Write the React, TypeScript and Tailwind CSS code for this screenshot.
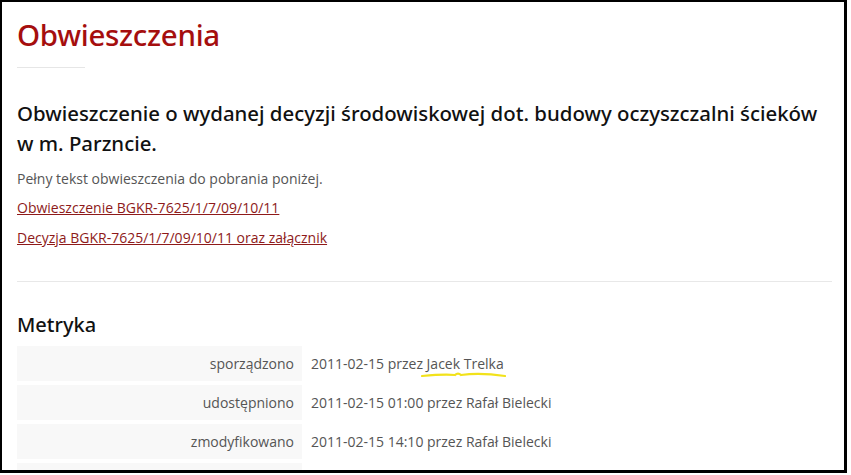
import React from "react";

const rows = [
  { label: "sporządzono", value: "2011-02-15 przez ", person: "Jacek Trelka", mark: true },
  { label: "udostępniono", value: "2011-02-15 01:00 przez ", person: "Rafał Bielecki" },
  { label: "zmodyfikowano", value: "2011-02-15 14:10 przez ", person: "Rafał Bielecki" },
  { label: "", value: "", person: "" },
];

export default function App() {
  return (
    <div className="w-[851px] h-[475px] bg-white">
      <div className="w-[847px] h-[473px] border-l-2 border-t-2 border-r-[3px] border-b-[3px] border-black overflow-hidden bg-white pl-[15px] pr-[12px] font-['Open_Sans',sans-serif]">
        <h1 className="pt-[13px] text-[29.5px] leading-[40px] text-[#a50e0e] font-['Noto_Sans',sans-serif] font-medium tracking-[-0.3px]">
          Obwieszczenia
        </h1>
        <div className="mt-[12px] w-[68px] h-px bg-[#e6e6e6]" />
        <h2 className="mt-[30px] text-[20.4px] leading-[30px] text-[#111] font-['Noto_Sans',sans-serif] font-medium">
          Obwieszczenie o wydanej decyzji środowiskowej dot. budowy oczyszczalni ścieków w m. Parzncie.
        </h2>
        <p className="mt-[11px] text-[14px] leading-[20px] text-[#555]">
          Pełny tekst obwieszczenia do pobrania poniżej.
        </p>
        <p className="mt-[9px] text-[14px] leading-[20px]">
          <a className="text-[#8e1a1a] underline">Obwieszczenie BGKR-7625/1/7/09/10/11</a>
        </p>
        <p className="mt-[10px] text-[14px] leading-[20px]">
          <a className="text-[#8e1a1a] underline">Decyzja BGKR-7625/1/7/09/10/11 oraz załącznik</a>
        </p>
        <div className="mt-[33px] h-px bg-[#e8e8e8]" />
        <h3 className="mt-[30px] text-[20px] leading-[26px] text-[#111] font-['Noto_Sans',sans-serif] font-medium">
          Metryka
        </h3>
        <div className="mt-[8px] flex flex-col gap-[4px]">
          {rows.map((r, i) => (
            <div key={i} className="flex h-[35px] items-center">
              <div className="w-[285px] h-full bg-[#f8f8f8] flex items-center justify-end pr-[8px] text-[14px] text-[#555]">
                {r.label}
              </div>
              <div className="pl-[9px] text-[14px] text-[#555] relative">
                {r.value}
                <span className="relative">
                  {r.person}
                  {r.mark && (
                    <svg className="absolute left-[-6px] top-[17px]" width="86" height="8" viewBox="0 0 86 8">
                      <path d="M1 5 C 12 4, 23 3, 34 4 C 36 2, 38 2, 40 4 C 55 2, 70 3, 84 5" stroke="#f2e21b" strokeWidth="2.2" fill="none" strokeLinecap="round" />
                    </svg>
                  )}
                </span>
              </div>
            </div>
          ))}
        </div>
      </div>
    </div>
  );
}
